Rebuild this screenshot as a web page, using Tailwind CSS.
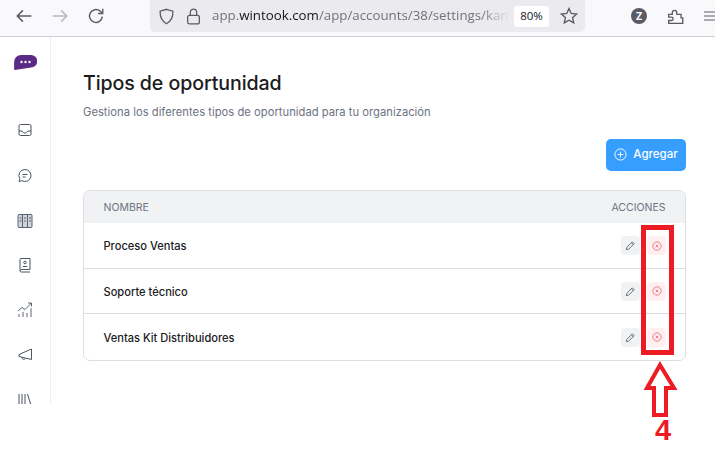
<!DOCTYPE html>
<html lang="en">
<head>
  <meta charset="UTF-8" />
  <title>Tipos de oportunidad</title>
  <script src="https://cdn.jsdelivr.net/npm/@tailwindcss/browser@4"></script>
</head>
<body class="relative w-[715px] h-[452px] overflow-hidden bg-white font-['Inter',sans-serif]">

  <!-- Browser toolbar -->
  <header class="h-[37px] flex items-start bg-[#f9f9fb] border-b border-[#cfcfd8] text-[#5b5b66]">
    <div class="w-[150px] h-[32px] flex items-center gap-[18px] pl-[15px] shrink-0">
      <svg class="w-[18px] h-[18px]" viewBox="0 0 16 16" fill="none" stroke="currentColor" stroke-width="1.3"><path d="M14.5 8H2M7 3 2 8l5 5"/></svg>
      <svg class="w-[18px] h-[18px] text-[#b9b9c0]" viewBox="0 0 16 16" fill="none" stroke="currentColor" stroke-width="1.3"><path d="M1.5 8H14M9 3l5 5-5 5"/></svg>
      <svg class="w-[18px] h-[18px]" viewBox="0 0 16 16" fill="none" stroke="currentColor" stroke-width="1.3"><path d="M13.6 8.6A5.7 5.7 0 1 1 11.6 3.6L13.5 5.4"/><path d="M14 1.5v4.3H9.8" stroke-width="1.2"/></svg>
    </div>
    <div class="w-[435px] h-[32px] flex items-center bg-[#ebebef] rounded-br-[5px] rounded-bl-[5px] pl-[8px] pr-[5px] shrink-0">
      <svg class="w-[17px] h-[17px] shrink-0" viewBox="0 0 16 16" fill="none" stroke="currentColor" stroke-width="1.2"><path d="M8 1.2 14 3c.2 5.500-1.800 9.500-6 11.800C3.800 12.500 1.800 8.500 2 3z"/></svg>
      <svg class="w-[15px] h-[17px] ml-[11px] shrink-0" viewBox="0 0 14 16" fill="none" stroke="currentColor" stroke-width="1.2"><rect x="1.500" y="7" width="11" height="8" rx="1.800"/><path d="M4 7V4a3 3 0 0 1 6 0v3"/></svg>
      <div class="w-[298px] ml-[11px] overflow-hidden whitespace-nowrap font-['Open_Sans',sans-serif] text-[13.300px] text-[#72727c] shrink-0 [mask-image:linear-gradient(to_right,black_90%,transparent)]">app.<span class="text-[#15141a]">wintook.com</span>/app/accounts/38/settings/kan</div>
      <div class="w-[35px] h-[21px] ml-[4px] flex items-center justify-center bg-white rounded-[3px] font-['Open_Sans',sans-serif] text-[11.500px] text-[#15141a] shrink-0">80%</div>
      <svg class="w-[18px] h-[18px] ml-[11px] shrink-0" viewBox="0 0 16 16" fill="none" stroke="currentColor" stroke-width="1.200"><path d="m8 1.300 2 4.400 4.800.5-3.600 3.200 1 4.700L8 11.700l-4.200 2.400 1-4.700L1.200 6.200 6 5.700z"/></svg>
    </div>
    <div class="flex-1 h-[32px] flex items-center pl-[46px]">
      <div class="w-[16px] h-[16px] rounded-full bg-[#5b5b66] text-white text-[10px] font-bold flex items-center justify-center">Z</div>
      <svg class="w-[18px] h-[18px] ml-[20px]" viewBox="0 0 16 16" fill="none" stroke="currentColor" stroke-width="1.200"><path d="M1.500 6.500h3.200V5a2 2 0 0 1 4 0v1.500h3.800v3.200H14v4.800H1.500v-2.500H4a1.500 1.500 0 0 0 0-3H1.500z"/></svg>
      <svg class="w-[14px] h-[14px] ml-[18px] shrink-0" viewBox="0 0 14 14" fill="none" stroke="currentColor" stroke-width="1.200"><path d="M1 3h13M1 7h13M1 11h13"/></svg>
    </div>
  </header>

  <div class="flex">
    <!-- Sidebar -->
    <aside class="w-[51px] h-[367px] shrink-0 border-r border-[#f0f0f2] overflow-hidden flex flex-col items-center text-[#4b5563] pr-[1px]">
      <svg class="w-[23px] h-[15px] mt-[18px] ml-[1px] shrink-0 text-[#5b2a86]" viewBox="0 0 23 15"><path d="M7 0h10a6 6 0 0 1 0 12.500L1 15c-.6 0-.9-.4-.9-1V7a7 7 0 0 1 7-7z" fill="currentColor"/><circle cx="7.500" cy="7" r="1.200" fill="#fff"/><circle cx="11.500" cy="7" r="1.200" fill="#fff"/><circle cx="15.500" cy="7" r="1.200" fill="#fff"/></svg>
      <div class="mt-[51px] shrink-0 flex flex-col items-center gap-[24.800px]">
        <svg class="w-[16px] h-[20px]" viewBox="0 0 16 20" fill="none" stroke="currentColor"><rect x="2" y="3.500" width="12" height="11" rx="1.500"/><path d="M2 10h3.200c.4 1.500 1.500 2 2.800 2s2.400-.5 2.800-2H14"/></svg>
        <svg class="w-[16px] h-[20px]" viewBox="0 0 16 20" fill="none" stroke="currentColor"><path d="M8 3.500a6 6 0 1 1-3 11.200l-3 .8.800-2.800A6 6 0 0 1 8 3.500z"/><path d="M5.500 8.500h5M5.500 11h3"/></svg>
        <svg class="w-[16px] h-[20px]" viewBox="0 0 16 20" fill="none" stroke="currentColor" stroke-width=".9"><rect x="1" y="3.500" width="14" height="13" rx="1" fill="#d1d5db"/><path d="M5.500 3.500v13M10.500 3.500v13M2.500 7h2M7 7h2M12 7h2M2.500 10h2M7 10h2M12 10h2"/></svg>
        <svg class="w-[16px] h-[20px]" viewBox="0 0 16 20" fill="none" stroke="currentColor"><path d="M3 15.500V4.500a1 1 0 0 1 1-1h9v11H4.200A1.500 1.500 0 0 0 3 16a1.500 1.500 0 0 0 1.200 1H13"/><circle cx="8" cy="7.500" r="1.300"/><path d="M5.800 11.500h4.400"/></svg>
        <svg class="w-[16px] h-[20px]" viewBox="0 0 16 20" fill="none" stroke="currentColor" stroke-width=".9"><path d="M1 11l4-3.500 3 2L14.500 3M11 3h3.500v3.500M2 17v-3M6 17v-5M10 17v-4M14 17V8"/></svg>
        <svg class="w-[16px] h-[20px]" viewBox="0 0 16 20" fill="none" stroke="currentColor"><path d="M14.500 4v10.500L2 11.500V9.500zM5 12.500c0 2 2.500 2.500 3.500 1"/></svg>
        <svg class="w-[16px] h-[20px]" viewBox="0 0 16 20" fill="none" stroke="currentColor"><path d="M2 4v13M5 4v13M8 4v13M10.500 4l4 13"/></svg>
      </div>
    </aside>

    <!-- Main -->
    <main class="w-[603px] ml-[32px] shrink-0">
      <h1 class="mt-[32px] text-[19.600px] leading-[28px] font-medium tracking-[-0.1px] text-[#1c1c1e]">Tipos de oportunidad</h1>
      <p class="mt-[7px] text-[11.200px] tracking-[0.03px] leading-[16px] text-[#6b7280]">Gestiona los diferentes tipos de oportunidad para tu organización</p>
      <div class="flex justify-end mt-[19px]">
        <button class="w-[80px] h-[32px] flex items-center justify-center gap-[6px] bg-[#369eff] rounded-[5px] text-white text-[11.500px] font-medium">
          <svg class="w-[13px] h-[13px] -mt-[2px]" viewBox="0 0 14 14" fill="none" stroke="currentColor"><circle cx="7" cy="7" r="6"/><path d="M7 4v6M4 7h6"/></svg>
          Agregar
        </button>
      </div>
      <div class="mt-[19px] h-[171px] border border-[#dcdde0] rounded-[7px] overflow-hidden text-[11.100px] font-medium text-[#1c2024]">
        <div class="h-[32px] flex items-center justify-between px-[19.500px] pt-[1px] bg-[#f1f2f4] text-[10.500px] font-normal text-[#6b7280]">
          <span>NOMBRE</span><span>ACCIONES</span>
        </div>
        <div class="h-[46px] flex items-center justify-between pl-[19.500px] pr-[19px] border-b border-[#dcdde0]">
          <span class="pt-[2px]">Proceso Ventas</span>
          <div class="flex gap-[7px]">
            <span class="w-[19px] h-[19px] flex items-center justify-center rounded-[4px] bg-[#f1f2f4] text-[#60646c]"><svg class="w-[11px] h-[11px]" viewBox="0 0 12 12" fill="none" stroke="currentColor"><path d="M1.500 10.500 2 8l6-6 2 2-6 6zM7 3l2 2"/></svg></span>
            <span class="w-[19px] h-[19px] flex items-center justify-center rounded-[4px] bg-[#ffeff0] text-[#ef6a74]"><svg class="w-[10px] h-[10px]" viewBox="0 0 12 12" fill="none" stroke="currentColor"><circle cx="6" cy="6" r="5"/><path d="M4.300 4.300l3.400 3.400M7.700 4.300 4.300 7.700"/></svg></span>
          </div>
        </div>
        <div class="h-[45px] flex items-center justify-between pl-[19.500px] pr-[19px] border-b border-[#dcdde0]">
          <span class="pt-[2px]">Soporte técnico</span>
          <div class="flex gap-[7px]">
            <span class="w-[19px] h-[19px] flex items-center justify-center rounded-[4px] bg-[#f1f2f4] text-[#60646c]"><svg class="w-[11px] h-[11px]" viewBox="0 0 12 12" fill="none" stroke="currentColor"><path d="M1.500 10.500 2 8l6-6 2 2-6 6zM7 3l2 2"/></svg></span>
            <span class="w-[19px] h-[19px] flex items-center justify-center rounded-[4px] bg-[#ffeff0] text-[#ef6a74]"><svg class="w-[10px] h-[10px]" viewBox="0 0 12 12" fill="none" stroke="currentColor"><circle cx="6" cy="6" r="5"/><path d="M4.300 4.300l3.400 3.400M7.700 4.300 4.300 7.700"/></svg></span>
          </div>
        </div>
        <div class="h-[46px] flex items-center justify-between pl-[19.500px] pr-[19px]">
          <span class="pt-[2px]">Ventas Kit Distribuidores</span>
          <div class="flex gap-[7px]">
            <span class="w-[19px] h-[19px] flex items-center justify-center rounded-[4px] bg-[#f1f2f4] text-[#60646c]"><svg class="w-[11px] h-[11px]" viewBox="0 0 12 12" fill="none" stroke="currentColor"><path d="M1.500 10.500 2 8l6-6 2 2-6 6zM7 3l2 2"/></svg></span>
            <span class="w-[19px] h-[19px] flex items-center justify-center rounded-[4px] bg-[#ffeff0] text-[#ef6a74]"><svg class="w-[10px] h-[10px]" viewBox="0 0 12 12" fill="none" stroke="currentColor"><circle cx="6" cy="6" r="5"/><path d="M4.300 4.300l3.400 3.400M7.700 4.300 4.300 7.700"/></svg></span>
          </div>
        </div>
      </div>
    </main>
  </div>

  <!-- Red annotation drawn over the screenshot -->
  <div class="absolute left-[641px] top-[225px] w-[33px] h-[130px] border-[5px] border-[#ed1c24]"></div>
  <svg class="absolute left-[640px] top-[358px] w-[40px] h-[62px]" viewBox="0 0 40 62" fill="none" stroke="#ed1c24" stroke-width="4"><path d="M20 7 7 30h7v27h12V30h8z"/></svg>
  <div class="absolute left-[650px] top-[412px] w-[26px] text-center font-['Liberation_Sans',sans-serif] font-bold text-[29px] leading-[36px] text-[#ed1c24]">4</div>
</body>
</html>
